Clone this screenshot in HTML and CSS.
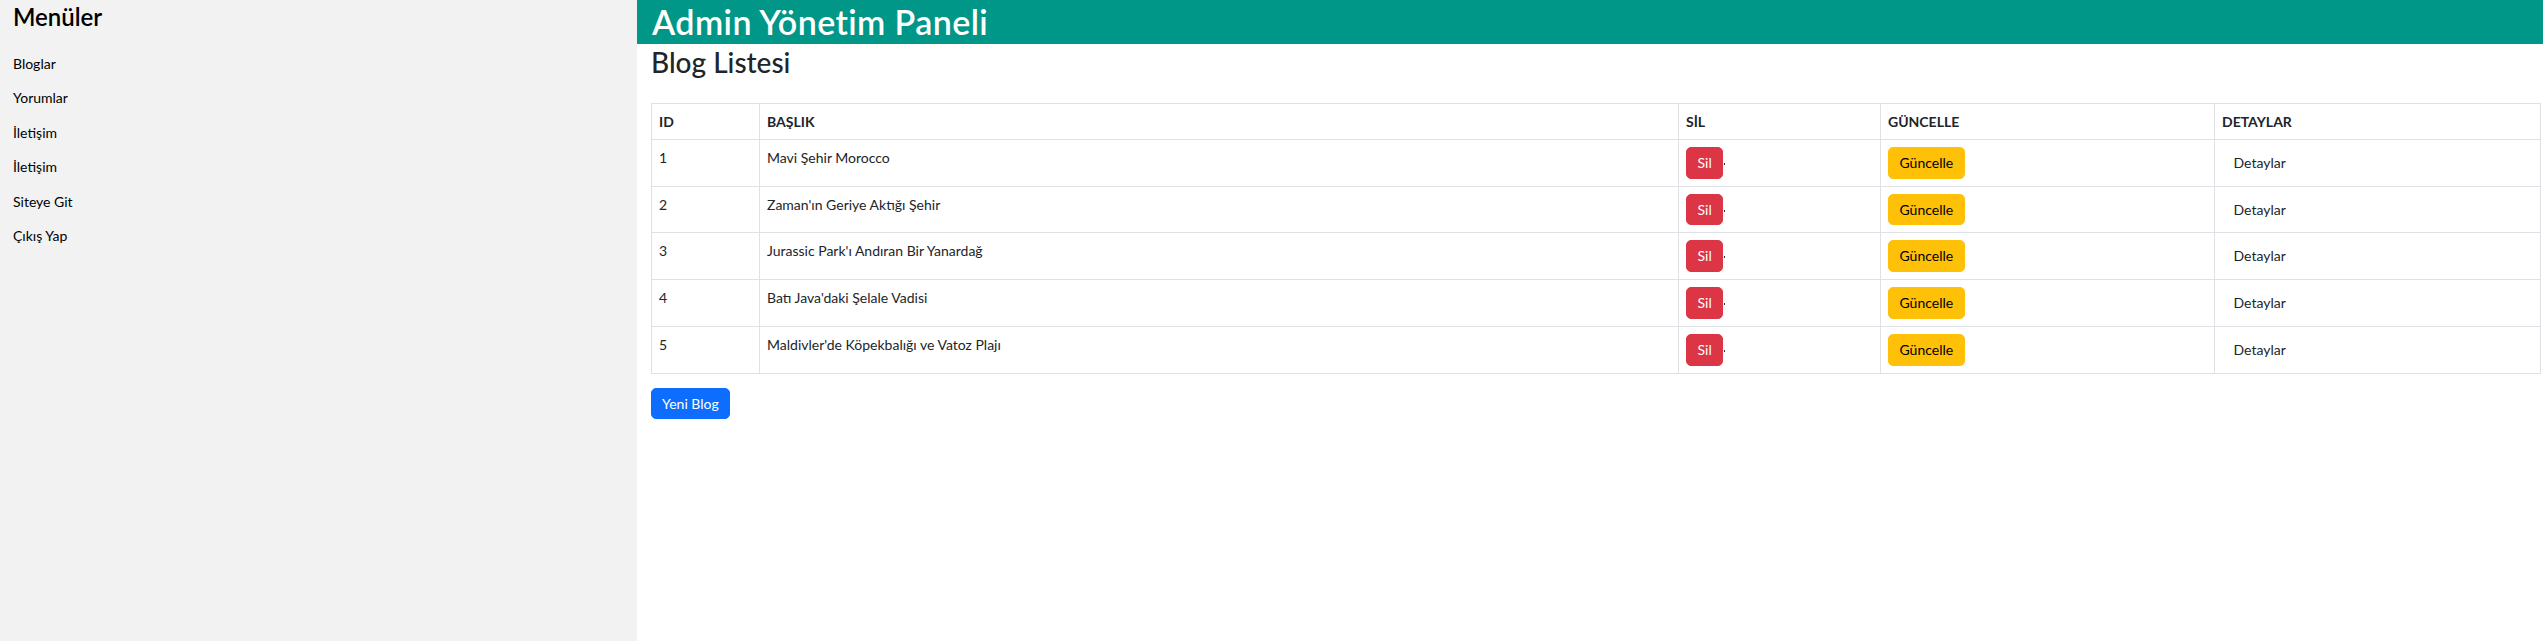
FILE: index.html
```html
<!DOCTYPE html>
<html lang="tr">
<head>
<meta charset="utf-8">
<title>Admin Yönetim Paneli</title>
<link rel="stylesheet" href="styles.css">
</head>
<body>
<div class="layout">
  <aside class="sidebar">
    <h3 class="side-title">Menüler</h3>
    <ul class="side-menu">
      <li><a href="#">Bloglar</a></li>
      <li><a href="#">Yorumlar</a></li>
      <li><a href="#">İletişim</a></li>
      <li><a href="#">İletişim</a></li>
      <li><a href="#">Siteye Git</a></li>
      <li><a href="#">Çıkış Yap</a></li>
    </ul>
  </aside>
  <main class="content">
    <h1 class="page-header">Admin Yönetim Paneli</h1>
    <section class="page-body">
      <h2 class="page-title">Blog Listesi</h2>
      <table class="blog-table">
        <colgroup>
          <col class="c-id">
          <col class="c-title">
          <col class="c-del">
          <col class="c-upd">
          <col class="c-det">
        </colgroup>
        <thead>
          <tr><th>ID</th><th>BAŞLIK</th><th>SİL</th><th>GÜNCELLE</th><th>DETAYLAR</th></tr>
        </thead>
        <tbody>
          <tr><td>1</td><td>Mavi Şehir Morocco</td><td><a class="btn btn-danger" href="#">Sil</a><span class="dot"></span></td><td><a class="btn btn-warning" href="#">Güncelle</a></td><td><a class="btn btn-plain" href="#">Detaylar</a></td></tr>
          <tr><td>2</td><td>Zaman'ın Geriye Aktığı Şehir</td><td><a class="btn btn-danger" href="#">Sil</a><span class="dot"></span></td><td><a class="btn btn-warning" href="#">Güncelle</a></td><td><a class="btn btn-plain" href="#">Detaylar</a></td></tr>
          <tr><td>3</td><td>Jurassic Park'ı Andıran Bir Yanardağ</td><td><a class="btn btn-danger" href="#">Sil</a><span class="dot"></span></td><td><a class="btn btn-warning" href="#">Güncelle</a></td><td><a class="btn btn-plain" href="#">Detaylar</a></td></tr>
          <tr><td>4</td><td>Batı Java'daki Şelale Vadisi</td><td><a class="btn btn-danger" href="#">Sil</a><span class="dot"></span></td><td><a class="btn btn-warning" href="#">Güncelle</a></td><td><a class="btn btn-plain" href="#">Detaylar</a></td></tr>
          <tr><td>5</td><td>Maldivler'de Köpekbalığı ve Vatoz Plajı</td><td><a class="btn btn-danger" href="#">Sil</a><span class="dot"></span></td><td><a class="btn btn-warning" href="#">Güncelle</a></td><td><a class="btn btn-plain" href="#">Detaylar</a></td></tr>
        </tbody>
      </table>
      <a class="btn btn-primary btn-new" href="#">Yeni Blog</a>
    </section>
  </main>
</div>
</body>
</html>
```
FILE: styles.css
```css
* { box-sizing: border-box; }
html, body {
  margin: 0;
  padding: 0;
  height: 100%;
}
body {
  font-family: Lato, "Noto Sans", "Liberation Sans", sans-serif;
  font-size: 14px;
  line-height: 1.5;
  color: #212529;
  background: #fff;
}
.layout {
  display: flex;
  min-height: 641px;
}
.sidebar {
  width: 637px;
  flex: 0 0 637px;
  background: #f2f2f2;
  padding: 2px 12px 0 13px;
  color: #000;
}
.side-title {
  margin: 0 0 14px;
  font-size: 24px;
  font-weight: 600;
  line-height: 30px;
}
.side-menu {
  list-style: none;
  margin: 0;
  padding: 0;
}
.side-menu li {
  padding: 6.75px 0;
  line-height: 21px;
}
.side-menu a {
  color: #000;
  text-decoration: none;
  font-size: 14px;
}
.content {
  flex: 1 1 auto;
  min-width: 0;
}
.page-header {
  margin: 0;
  background: #009688;
  color: #fff;
  font-size: 34px;
  font-weight: 600;
  letter-spacing: 0.4px;
  line-height: 44px;
  height: 44px;
  padding: 0 15px;
}
.page-body {
  padding: 0 2px 0 14px;
}
.page-title {
  margin: 0 0 25px;
  padding-top: 2px;
  font-size: 28px;
  font-weight: 500;
  line-height: 32px;
}
.blog-table {
  width: 100%;
  border-collapse: collapse;
  table-layout: fixed;
  margin-bottom: 14px;
}
.c-id { width: 108px; }
.c-title { width: 919px; }
.c-del { width: 202px; }
.c-upd { width: 334px; }
.blog-table th,
.blog-table td {
  border: 1px solid #dee2e6;
  padding: 7px;
  text-align: left;
  vertical-align: top;
  line-height: 21px;
}
.blog-table th {
  font-weight: 700;
}
.btn {
  display: inline-block;
  font-size: 14px;
  line-height: 19.7px;
  padding: 5px 10.5px;
  border: 1px solid transparent;
  border-radius: 5px;
  text-decoration: none;
  vertical-align: top;
}
.btn-danger {
  background: #dc3545;
  border-color: #dc3545;
  color: #fff;
}
.btn-warning {
  background: #ffc107;
  border-color: #ffc107;
  color: #000;
}
.btn-plain {
  background: transparent;
  color: #212529;
}
.btn-primary {
  background: #0d6efd;
  border-color: #0d6efd;
  color: #fff;
}
.btn-new {
  padding: 5px 10px;
}
.dot {
  display: inline-block;
  width: 1px;
  height: 2px;
  background: #333;
  margin-left: 1px;
  margin-top: 16px;
  vertical-align: top;
}
```
